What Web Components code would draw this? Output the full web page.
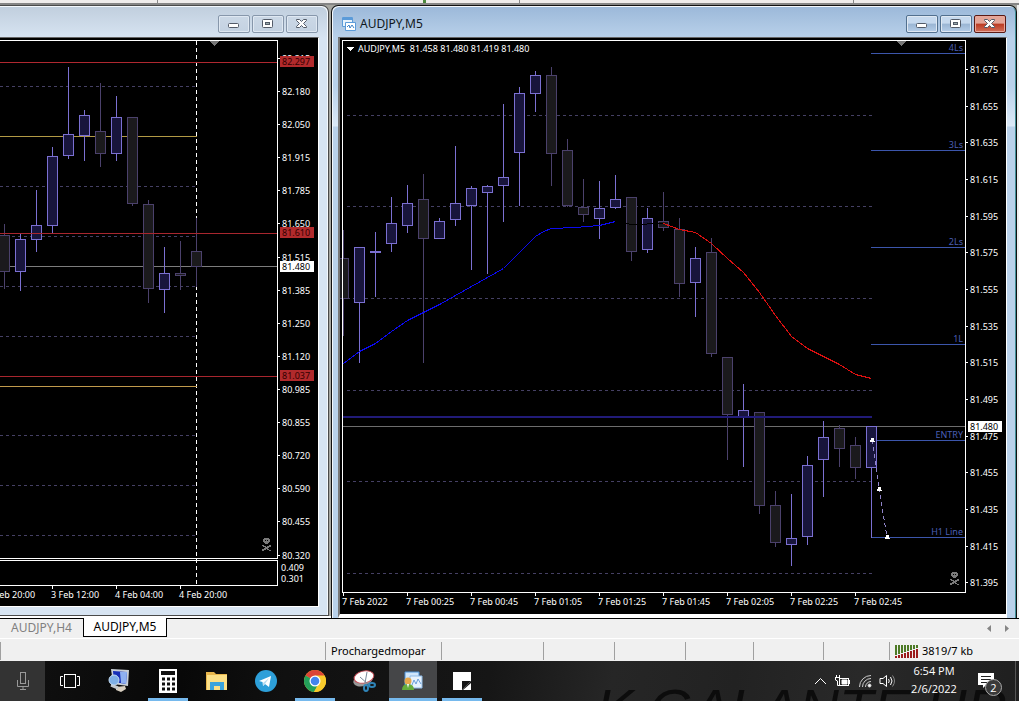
<!DOCTYPE html>
<html lang="en">
<head>
<meta charset="utf-8">
<title>AUDJPY,M5</title>
<style>
    body {
        margin: 0;
        font-family: "Noto Sans", "Open Sans", sans-serif;
        font-size: 12px;
        background: #f0f0f0;
        overflow: hidden;
    }
</style>
</head>
<body>
<trade-terminal></trade-terminal>

<script>
// Chart data: [x, high, open/close top, open/close bottom, low, direction]
const charts = {
    h4: {
        origin: [0, 38],
        frame: { left: -2, top: 40, right: 277, bottom: 558 },
        sub: { top: 560, bottom: 585 },
        grid: { from: 0, to: 197, rows: [86, 186, 236, 286, 336, 435, 485, 535] },
        lines: [
            [0, 277, 62, '#b02830'], [0, 197, 136, '#b29a45'], [0, 277, 233, '#a8262e'],
            [0, 277, 266, '#7c7c7c'], [0, 277, 376, '#a8262e'], [0, 197, 386, '#c09a4c']
        ],
        candles: [
            [4, 224, 235, 271, 289, 'd'], [20, 234, 239, 271, 291, 'u'], [36, 190, 225, 239, 252, 'u'],
            [52, 147, 156, 225, 233, 'u'], [68, 67, 134, 155, 159, 'u'], [84, 110, 115, 135, 161, 'u'],
            [100, 83, 131, 153, 167, 'd'], [116, 96, 117, 153, 161, 'u'], [132, 117, 117, 203, 206, 'd'],
            [148, 200, 204, 288, 303, 'd'], [164, 247, 273, 289, 313, 'u'], [180, 241, 273, 275, 290, 'd'],
            [196, 218, 251, 266, 287, 'd']
        ],
        separator: 196,
        shift: 214,
        skull: [266, 544],
        axisX: 282,
        prices: [
            ['82.315', 58], ['82.180', 91], ['82.050', 124], ['81.915', 157], ['81.785', 190],
            ['81.650', 223], ['81.515', 257], ['81.385', 290], ['81.250', 323], ['81.120', 356],
            ['80.985', 389], ['80.855', 422], ['80.720', 455], ['80.590', 488], ['80.455', 521], ['80.320', 555]
        ],
        plain: [['0.409', 281, 567], ['0.301', 281, 578]],
        tags: [['82.297', 61, 'red'], ['81.610', 232, 'red'], ['81.480', 266, 'white'], ['81.037', 375, 'red']],
        timeY: 594,
        times: [['2 Feb 20:00', -12], ['3 Feb 12:00', 52], ['4 Feb 04:00', 116], ['4 Feb 20:00', 180]]
    },
    m5: {
        origin: [340, 38],
        frame: { left: 342, top: 40, right: 965, bottom: 592 },
        grid: { from: 347, to: 872, rows: [115, 206, 298, 390, 481, 573] },
        lines: [
            [343, 965, 426, '#6d6d6d'],
            [871, 965, 53, '#3c56ac'], [871, 965, 150, '#3c56ac'], [871, 965, 247, '#3c56ac'],
            [871, 965, 344, '#3c56ac'], [871, 965, 440, '#3c56ac'], [871, 965, 537, '#3c56ac']
        ],
        candles: [
            [343, 230, 258, 298, 336, 'd'], [359, 247, 247, 302, 363, 'u'], [375, 232, 251, 252, 297, 'u'],
            [391, 197, 223, 243, 252, 'u'], [407, 185, 203, 225, 233, 'u'], [423, 174, 199, 238, 363, 'd'],
            [439, 218, 221, 238, 238, 'u'], [455, 146, 203, 219, 226, 'u'], [471, 186, 188, 205, 270, 'u'],
            [487, 185, 186, 192, 274, 'u'], [503, 104, 177, 185, 222, 'u'], [519, 87, 93, 152, 206, 'u'],
            [535, 71, 75, 93, 112, 'u'], [551, 67, 75, 153, 186, 'd'], [567, 139, 150, 205, 207, 'd'],
            [583, 179, 207, 214, 222, 'd'], [599, 181, 208, 218, 239, 'u'], [615, 175, 199, 207, 209, 'u'],
            [631, 197, 197, 251, 261, 'd'], [647, 208, 218, 249, 253, 'u'], [663, 192, 221, 227, 231, 'd'],
            [679, 218, 229, 283, 297, 'd'], [695, 247, 258, 282, 317, 'u'], [711, 238, 252, 353, 357, 'd'],
            [727, 357, 357, 414, 460, 'd'], [743, 384, 410, 416, 467, 'u'], [759, 412, 412, 505, 514, 'd'],
            [775, 491, 505, 542, 547, 'd'], [791, 494, 538, 544, 566, 'u'], [807, 456, 465, 536, 545, 'u'],
            [823, 421, 437, 459, 497, 'u'], [839, 425, 428, 448, 467, 'd'], [855, 437, 445, 467, 479, 'd'],
            [871, 426, 426, 467, 538, 'u']
        ],
        curves: [
            ['#0c0af0', '343,363 359,351 375,343 391,331 407,320 423,312 439,304 455,295 471,286 487,277 503,268 519,252 535,236 543,231 551,228 575,227 599,225 615,221'],
            ['#000', '615,221 631,224 663,223'],
            ['#dc1010', '663,223 679,229 695,232 711,243 727,258 743,272 759,292 775,315 791,336 807,348 823,356 839,364 855,374 871,378']
        ],
        band: [343, 872, 416],
        levels: [['4Ls', 48], ['3Ls', 145], ['2Ls', 242], ['1L', 339], ['ENTRY', 435], ['H1 Line', 532]],
        trend: [[872, 440], [879, 489], [887, 537]],
        shift: 901,
        skull: [954, 578],
        header: 'AUDJPY,M5\u00a0 81.458 81.480 81.419 81.480',
        axisX: 970,
        prices: [
            ['81.675', 69], ['81.655', 106], ['81.635', 142], ['81.615', 179], ['81.595', 216],
            ['81.575', 252], ['81.555', 289], ['81.535', 326], ['81.515', 362], ['81.495', 399],
            ['81.475', 436], ['81.455', 472], ['81.435', 509], ['81.415', 546], ['81.395', 582]
        ],
        tags: [['81.480', 426, 'white']],
        timeY: 601,
        times: [
            ['7 Feb 2022', 343], ['7 Feb 00:25', 407], ['7 Feb 00:45', 471], ['7 Feb 01:05', 535],
            ['7 Feb 01:25', 599], ['7 Feb 01:45', 663], ['7 Feb 02:05', 727], ['7 Feb 02:25', 791], ['7 Feb 02:45', 855]
        ]
    }
};

const skullShape = `
    <g fill="#7a7a7a"><path d="M-2 -6h5v1h1v3h-1v1h-1v1h-3v-1h-1v-1h-1v-3h1z"/>
    <path d="M-4 1h2v1h2v1h1v-1h2v-1h2v2h-2v1h-1v1h1v1h2v1h-2v-1h-2v-1h-1v1h-2v1h-2v-2h2v-1h1v-1h-2z"/></g>
    <path d="M-1 -4h1v1h-1z M1 -4h1v1h-1z" fill="#000"/>`;

class PriceChart extends HTMLElement {
    constructor() {
        super();
        this.attachShadow({ mode: 'open' });
    }

    connectedCallback() {
        const c = charts[this.getAttribute('source')];
        this.shadowRoot.innerHTML = `
            <style>
                :host { display: block; background: #000; overflow: hidden; }
                svg { display: block; width: 100%; height: 100%; shape-rendering: crispEdges; }
                text { font-size: 9px; fill: #fff; white-space: pre; }
                .level { fill: #4a5fb4; text-anchor: end; }
                .u { fill: #18153c; stroke: #7b70d2; }
                .d { fill: #1b1a1d; stroke: #4b416c; }
                .red rect { fill: #b12a2c; }
                .red text { fill: #300; }
                .white rect { fill: #fff; }
                .white text { fill: #000; }
            </style>
            <svg role="img" aria-label="Candlestick chart">
                <g transform="translate(${-c.origin[0]} ${-c.origin[1]})">
                    ${this.plot(c)}
                    ${this.axes(c)}
                </g>
            </svg>
        `;
    }

    plot(c) {
        let out = '';
        if (c.separator) {
            out += `<path d="M${c.separator + .5} 41 V${c.sub.bottom}" stroke="#fff" stroke-dasharray="4 3"/>`;
        }
        c.grid.rows.forEach(y => {
            out += `<path d="M${c.grid.from} ${y + .5} H${c.grid.to}" stroke="#454064" stroke-dasharray="3 3"/>`;
        });
        c.lines.forEach(([x1, x2, y, color]) => {
            out += `<path d="M${x1} ${y + .5} H${x2}" stroke="${color}"/>`;
        });
        c.candles.forEach(([x, high, top, bottom, low, dir]) => {
            out += `<g class="${dir}"><path d="M${x + .5} ${high} V${low}"/>
                <rect x="${x - 4.5}" y="${top + .5}" width="10" height="${bottom - top}"/></g>`;
        });
        if (c.separator) {
            out += `<path d="M0 233.5 H277" stroke="#a8262e"/>`;
        }
        (c.curves || []).forEach(([color, points]) => {
            out += `<polyline points="${points}" fill="none" stroke="${color}" transform="translate(.5 .5)"/>`;
        });
        if (c.band) {
            const [x1, x2, y] = c.band;
            out += `<rect x="${x1}" y="${y}" width="${x2 - x1}" height="2" fill="#211b78"/>`;
        }
        (c.levels || []).forEach(([label, y]) => {
            out += `<text class="level" x="963" y="${y + 3}">${label}</text>`;
        });
        if (c.trend) {
            out += `<polyline points="${c.trend.join(' ')}" fill="none" stroke="#8f84c8" stroke-dasharray="4 3"/>`;
            c.trend.forEach(([x, y]) => {
                out += `<path d="M${x - 2} ${y + 2} v-2 h1 v-2 h3 v3 h1 v1 z" fill="#fff"/>`;
            });
        }
        if (c.header) {
            out += `<path d="M346 47 h8 l-4 4 z" fill="#fff"/><text x="358" y="52">${c.header}</text>`;
        }
        out += `<path d="M${c.shift - 5} 41 h10 l-5 5 z" fill="#777"/>`;
        out += `<g transform="translate(${c.skull[0]} ${c.skull[1]})">${skullShape}</g>`;
        return out;
    }

    axes(c) {
        const f = c.frame;
        const end = c.sub ? c.sub.bottom : f.bottom;
        let out = `<rect x="${f.left + .5}" y="${f.top + .5}" width="${f.right - f.left}" height="${f.bottom - f.top}" fill="none" stroke="#fff"/>`;
        if (c.sub) {
            out += `<rect x="${f.left + .5}" y="${c.sub.top + .5}" width="${f.right - f.left}" height="${c.sub.bottom - c.sub.top}" fill="none" stroke="#fff"/>`;
        }
        c.prices.forEach(([label, y]) => {
            out += `<path d="M${f.right} ${y + .5} h3" stroke="#fff"/><text x="${c.axisX}" y="${y + 4}">${label}</text>`;
        });
        (c.plain || []).forEach(([label, x, y]) => {
            out += `<text x="${x}" y="${y + 4}">${label}</text>`;
        });
        c.tags.forEach(([label, y, kind]) => {
            out += `<g class="${kind}"><rect x="${c.axisX - 2}" y="${y - 5}" width="34" height="11"/>
                <text x="${c.axisX}" y="${y + 4}">${label}</text></g>`;
        });
        c.times.forEach(([label, x]) => {
            out += `<path d="M${x + .5} ${end} v4" stroke="#fff"/><text x="${x - 1}" y="${c.timeY + 4}">${label}</text>`;
        });
        return out;
    }
}

class ChartWindow extends HTMLElement {
    constructor() {
        super();
        this.attachShadow({ mode: 'open' });
    }

    connectedCallback() {
        this.shadowRoot.innerHTML = `
            <style>
                :host {
                    display: flex;
                    flex-direction: column;
                    box-sizing: border-box;
                    background: linear-gradient(#c0cedd, #d7e4f2 32px);
                    border: 1px solid #4a4a4a;
                    border-left: 0;
                    border-radius: 0 7px 0 0;
                    box-shadow: inset -1px 1px #f4f8fc;
                    padding: 0 9px 8px 0;
                    overflow: hidden;
                }
                :host([active]) {
                    background: linear-gradient(#9bb8d9, #b9d1ea 32px, #b9d1ea 80px, #dbe9f7 120px, #b9d1ea 121px);
                    border: 1px solid #111;
                    border-bottom: 0;
                    border-radius: 7px 7px 0 0;
                    box-shadow: inset 1px 1px #f4f8fc, inset -1px 0 #3f8f96;
                    padding: 0 9px 0 6px;
                }
                header {
                    display: flex;
                    align-items: center;
                    box-sizing: border-box;
                    height: 31px;
                    padding: 5px 1px 0 4px;
                    gap: 4px;
                    color: #101820;
                }
                h2 { flex: 1; margin: 0; font-size: 12px; font-weight: 400; line-height: 16px; }
                .buttons { display: flex; gap: 2px; }
                button {
                    width: 32px;
                    height: 18px;
                    padding: 0;
                    border: 1px solid #8797ab;
                    border-radius: 2px;
                    background: linear-gradient(#cbd8e6, #c4d2e2);
                    box-shadow: inset 0 0 0 1px #dfe8f2;
                }
                :host([active]) button { border-color: #52708f; background: linear-gradient(#c6d9ee 45%, #9ab5d3 50%, #b5cee9); }
                :host([active]) .close { border-color: #5a1a14; background: linear-gradient(#e3a598 45%, #bb3a22 50%, #d2705a); box-shadow: inset 0 0 0 1px #e8a79b; }
                button svg { display: block; margin: auto; }
                .body {
                    flex: 1;
                    display: flex;
                    min-height: 0;
                    border-top: 1px solid #666;
                    border-right: 1px solid #fff;
                    border-bottom: 1px solid #fff;
                }
                :host([active]) .body { border-left: 2px solid #777; border-bottom-width: 4px; }
                ::slotted(*) { flex: 1; min-width: 0; }
            </style>
            <header>
                <slot name="icon"></slot>
                <h2>${this.getAttribute('caption') || ''}</h2>
                <div class="buttons">
                    <button aria-label="Minimize"><svg width="14" height="12"><rect x="1.5" y="5.5" width="10" height="4" rx="1" fill="#fff" stroke="#535b68"/></svg></button>
                    <button aria-label="Restore"><svg width="14" height="12"><rect x="1.5" y="1.5" width="10" height="8" rx="1" fill="#fff" stroke="#535b68"/><rect x="4.5" y="4.5" width="4" height="2" fill="#9aa" stroke="#535b68"/></svg></button>
                    <button class="close" aria-label="Close"><svg width="14" height="12"><path d="M1.500 1.500h3l2 2 2-2h3v1l-3 3 3 3v1h-3l-2-2-2 2h-3v-1l3-3-3-3z" fill="#fff" stroke="#535b68"/></svg></button>
                </div>
            </header>
            <div class="body"><slot></slot></div>
        `;
    }
}

class ChartTabs extends HTMLElement {
    constructor() {
        super();
        this.attachShadow({ mode: 'open' });
    }

    connectedCallback() {
        this.shadowRoot.innerHTML = `
            <style>
                :host { display: flex; height: 20px; background: #f0f0f0; border-bottom: 1px solid #fff; }
                button { font: inherit; line-height: 18px; height: 19px; padding: 0; border: 0; background: none; }
                .off { width: 83px; color: #808080; border-top: 1px solid #000; }
                .on { width: 84px; background: #fff; color: #000; border: 1px solid #000; border-top: 0; }
                .rest { flex: 1; display: flex; justify-content: flex-end; align-items: center; gap: 7px; border-top: 1px solid #000; padding-right: 6px; }
                .rest button { width: 11px; }
                svg { display: block; margin: auto; }
            </style>
            <button class="off">AUDJPY,H4</button>
            <button class="on">AUDJPY,M5</button>
            <div class="rest">
                <button aria-label="Scroll left"><svg width="5" height="8"><path d="M4 0v7L0 3.500z" fill="#858585"/></svg></button>
                <button aria-label="Scroll right"><svg width="5" height="8"><path d="M0 0v7l4-3.500z" fill="#858585"/></svg></button>
            </div>
        `;
    }
}

class StatusBar extends HTMLElement {
    constructor() {
        super();
        this.attachShadow({ mode: 'open' });
    }

    connectedCallback() {
        let bars = '';
        for (let i = 0; i < 8; i++) {
            bars += `<path d="M${i * 3 + 1} 0V${10 - i}" stroke="#4d7a26" stroke-width="2"/>
                <path d="M${i * 3 + 1} ${11 - i}V13" stroke="#9c1c1c" stroke-width="2"/>`;
        }
        this.shadowRoot.innerHTML = `
            <style>
                :host {
                    display: grid;
                    grid-template-columns: 325px 116px 102px 71px 71px 68px 70px 66px 1fr;
                    height: 22px;
                    background: #f0f0f0;
                    color: #000;
                    font-size: 11px;
                }
                div { display: flex; align-items: center; gap: 4px; height: 18px; margin-top: 3px; border-left: 1px solid #a0a0a0; padding-left: 5px; line-height: 16px; box-sizing: border-box; }
                div:first-child { border: 0; }
            </style>
            <div></div><div>Prochargedmopar</div><div></div><div></div><div></div><div></div><div></div><div></div>
            <div><svg width="23" height="13">${bars}</svg>3819/7 kb</div>
        `;
    }
}

class TaskButton extends HTMLElement {
    constructor() {
        super();
        this.attachShadow({ mode: 'open' });
    }

    connectedCallback() {
        this.shadowRoot.innerHTML = `
            <style>
                :host { display: block; width: 48px; height: 40px; }
                button { display: flex; width: 100%; height: 100%; align-items: center; justify-content: center; padding: 0; border: 0; background: none; }
                :host([running]) button { background: linear-gradient(#76b9ed, #76b9ed) 50% 100% / 40px 3px no-repeat; }
                :host([active]) button { background: linear-gradient(#76b9ed, #76b9ed) 50% 100% / 48px 3px no-repeat, #454648; }
                :host([mic]) { width: 45px; background: #333; }
            </style>
            <button aria-label="${this.getAttribute('label')}"><slot></slot></button>
        `;
    }
}

class TaskBar extends HTMLElement {
    constructor() {
        super();
        this.attachShadow({ mode: 'open' });
    }

    connectedCallback() {
        this.shadowRoot.innerHTML = `
            <style>
                :host {
                    display: flex;
                    position: relative;
                    height: 40px;
                    overflow: hidden;
                    color: #fff;
                    background: linear-gradient(100deg, #111 0, #080808 18%, #101010 28%, #161616 48%, #262626 60%, #222 72%, #292929 84%, #1f1f1f 100%);
                    font-family: "Open Sans", "Noto Sans", sans-serif;
                }
                .wallpaper { position: absolute; right: 12px; top: 22px; font: italic 56px/52px "Liberation Sans", sans-serif; color: #0c0c0c; white-space: pre; }
                .apps { display: flex; gap: 1px; position: relative; }
                svg { display: block; }
                .tray { display: flex; align-items: center; position: relative; margin-left: auto; gap: 7px; }
                button { padding: 0; border: 0; background: none; color: inherit; font: inherit; }
                .clock { width: 64px; height: 40px; font-size: 11px; line-height: 18px; text-align: center; padding-bottom: 2px; }
                .notes { position: relative; width: 35px; height: 40px; }
                .notes svg { margin: 0 0 0 5px; }
                .badge { position: absolute; left: 12px; top: 18px; width: 15px; height: 15px; border: 1px solid #aaa; border-radius: 50%; background: #3a3a3a; font-size: 11px; line-height: 15px; text-align: center; }
                .peek { width: 4px; height: 40px; border-left: 1px solid #555; box-sizing: border-box; }
            </style>
            <span class="wallpaper">K GALANTE UR</span>
            <div class="apps">
                <task-button mic label="Microphone"><svg width="14" height="18" fill="none" stroke="#999"><rect x="4.500" y=".5" width="5" height="11"/><path d="M1.500 8v6.500h11V8M7 14.500V17M4 17.500h6"/></svg></task-button>
                <task-button label="Task view"><svg width="20" height="16" fill="none" stroke="#fff"><rect x="4.500" y="1.500" width="11" height="13"/><path d="M3 3.500H.5v9H3M17 3.500h2.500v9H17"/></svg></task-button>
                <task-button label="Remote"><svg width="24" height="24">
                    <path d="M4 0l18 1-1 16-15-2z" fill="#c9cfd6"/><path d="M6 2l14 1-1 12-12-2z" fill="#1730b8"/><path d="M13 3l7 0-1 12-5-1z" fill="#8fb0f0"/>
                    <path d="M9 18l9-1 1 3-5 3-5-2z" fill="#d8cfc0"/><path d="M4 16l7 3" stroke="#c4c8cc" stroke-width="3"/><circle cx="7" cy="11" r="5" fill="#7fb0e6" stroke="#c4dcf4"/></svg></task-button>
                <task-button running label="Calculator"><svg width="18" height="24"><path fill="#fff" d="M0 0h18v24H0z"/><path fill="#111" d="M2 2h14v4H2z"/>
                    <path d="M3 10h13M3 15h13M3 20h13" stroke="#111" stroke-width="3" stroke-dasharray="3 2"/></svg></task-button>
                <task-button label="File Explorer"><svg width="22" height="20"><path d="M0 1h8l2 2h11v16H0z" fill="#e8b64c"/><path d="M1 4h20v15H1z" fill="#fbdf86"/><path d="M4 11h14v8h-4v-4H8v4H4z" fill="#39a3dc"/></svg></task-button>
                <task-button label="Telegram"><svg width="22" height="22"><circle cx="11" cy="11" r="11" fill="#2d9fd9"/><path d="M4 11l12-5-2 11-4-3-2 2-.5-4z" fill="#fff"/><path d="M8 13l6-5-4 6-2 2z" fill="#b9dcf0"/></svg></task-button>
                <task-button running label="Chrome"><svg width="22" height="22"><circle cx="11" cy="11" r="11" fill="#f6c324"/><path d="M11 11L1.500 5.500A11 11 0 0 1 20.500 5.500z" fill="#dc4437"/><path d="M1.500 5.500A11 11 0 0 0 10 22l5-9-4-2z" fill="#23a05a"/><path d="M11 5.500h9.500A11 11 0 0 1 10 22l5-9z" fill="#f8cb2c"/><circle cx="11" cy="11" r="5.500" fill="#fff"/><circle cx="11" cy="11" r="4.300" fill="#4384ee"/></svg></task-button>
                <task-button label="Snipping Tool"><svg width="24" height="24"><ellipse cx="11" cy="11" rx="10" ry="6" fill="#999" transform="rotate(-18 11 11)"/><ellipse cx="12" cy="8" rx="10" ry="6" fill="#fff" stroke="#c8505a" transform="rotate(-12 12 8)"/><path d="M8 8l9 8M15 3l-2 11" stroke="#789"/><g fill="none" stroke="#2f84b8" stroke-width="2"><ellipse cx="14" cy="19" rx="2" ry="3"/><ellipse cx="20" cy="16" rx="3" ry="2"/></g></svg></task-button>
                <task-button active label="MetaTrader"><svg width="22" height="20"><path d="M3 1h14v13H3z" fill="#cfe6fb" stroke="#4a90d6"/><path d="M8 5h12v12H8z" fill="#e6f2fd" stroke="#8fbbe6"/><path d="M10 14l2-5 2 4 2-5 3 5" fill="none" stroke="#6b9fd8"/><circle cx="6" cy="10" r="3.500" fill="#e6a64a"/><path d="M0 19q0-6 6-6t6 6z" fill="#66ad3c"/><path d="M5 13l1 4 1-4z" fill="#fff"/></svg></task-button>
                <task-button running label="Sticky Notes"><svg width="18" height="18"><path fill="#fff" d="M0 0h18v18H0z"/><path fill="#151515" d="M9 9h9l-9 9z"/><path fill="#151515" d="M18 9v9H9z"/><path fill="#fff" d="M0 0h9v18H0z"/><path fill="#fff" d="M18 11v7h-8z"/></svg></task-button>
            </div>
            <div class="tray">
                <button aria-label="Show hidden icons"><svg width="13" height="8" fill="none" stroke="#fff"><path d="M1 7l5.500-5.500L12 7"/></svg></button>
                <button aria-label="Battery"><svg width="17" height="12" fill="none" stroke="#fff"><rect x="5.500" y="3.500" width="9" height="7"/><path d="M8 5h5v4H8z" fill="#fff"/><path d="M15.500 5v4M1 2.500h5M2.500 0v3M5.500 0v3M1.500 3v2l2 1v4.500h2"/></svg></button>
                <button aria-label="Wi-Fi"><svg width="14" height="14" fill="none" stroke="#ccc"><path d="M1.500 13A11.500 11.500 0 0 1 13 1.500M4.500 13A8.500 8.500 0 0 1 13 4.500M7.500 13A5.500 5.500 0 0 1 13 7.500"/><circle cx="11.500" cy="11.500" r="1.500" fill="#fff"/></svg></button>
                <button aria-label="Volume"><svg width="16" height="14" fill="none" stroke="#fff"><path d="M1 4.500h3l3.500-3v11l-3.500-3H1zM9.500 5q1.500 2 0 4M11.500 3q3 4 0 8"/><path d="M13.500 1.500q4 5.500 0 11" stroke="#888"/></svg></button>
                <button class="clock">6:54 PM<br>2/6/2022</button>
                <button class="notes" aria-label="Notifications"><svg width="16" height="16"><path fill="#fff" d="M0 0h16v12H8l-3 3v-3H0z"/><path d="M3 3.500h10M3 6.500h10M3 9.500h6" stroke="#222"/></svg><span class="badge">2</span></button>
                <div class="peek"></div>
            </div>
        `;
    }
}

class TradeTerminal extends HTMLElement {
    constructor() {
        super();
        this.attachShadow({ mode: 'open' });
    }

    connectedCallback() {
        this.shadowRoot.innerHTML = `
            <style>
                :host { display: grid; grid-template-rows: 5px 1fr auto auto auto; height: 100vh; }
                .toolbar { box-sizing: border-box; background: linear-gradient(90deg, #efeceb, #efeceb 157px, #888 157px, #888 158px, #efeceb 158px, #efeceb 423px, #4c8a3e 423px, #4c8a3e 426px, #efeceb 426px, #efeceb 519px, #888 519px, #888 520px, #efeceb 520px, #efeceb 853px, #888 853px, #888 854px, #efeceb 854px); border-bottom: 2px solid #858585; }
                .desktop {
                    display: grid;
                    grid-template-columns: 329px minmax(0, 1fr);
                    column-gap: 2px;
                    padding-right: 2px;
                    min-height: 0;
                    background: linear-gradient(#f0f0f0, #f0f0f0) 100% 0 / 2px 100% no-repeat, linear-gradient(#fff, #fff) 0 100% / 100% 2px no-repeat, #a6a6a0;
                }
                chart-window:first-child { margin-bottom: 2px; }
            </style>
            <div class="toolbar"></div>
            <div class="desktop">
                <chart-window><price-chart source="h4"></price-chart></chart-window>
                <chart-window active caption="AUDJPY,M5">
                    <svg slot="icon" width="14" height="14" style="flex:none"><path d="M.5.500h10v9H.5z" fill="#e8f3fd" stroke="#5b9bd9"/><path d="M1 2h9" stroke="#5b9bd9" stroke-width="2"/><path d="M3.500 5.500h10v8h-10z" fill="#fff" stroke="#5b9bd9"/><path d="M5 10l2-2 1 3 2-3 2 3" fill="none" stroke="#3d82c8"/></svg>
                    <price-chart source="m5"></price-chart>
                </chart-window>
            </div>
            <chart-tabs></chart-tabs>
            <status-bar></status-bar>
            <task-bar></task-bar>
        `;
    }
}

customElements.define('price-chart', PriceChart);
customElements.define('chart-window', ChartWindow);
customElements.define('chart-tabs', ChartTabs);
customElements.define('status-bar', StatusBar);
customElements.define('task-button', TaskButton);
customElements.define('task-bar', TaskBar);
customElements.define('trade-terminal', TradeTerminal);
</script>
</body>
</html>
